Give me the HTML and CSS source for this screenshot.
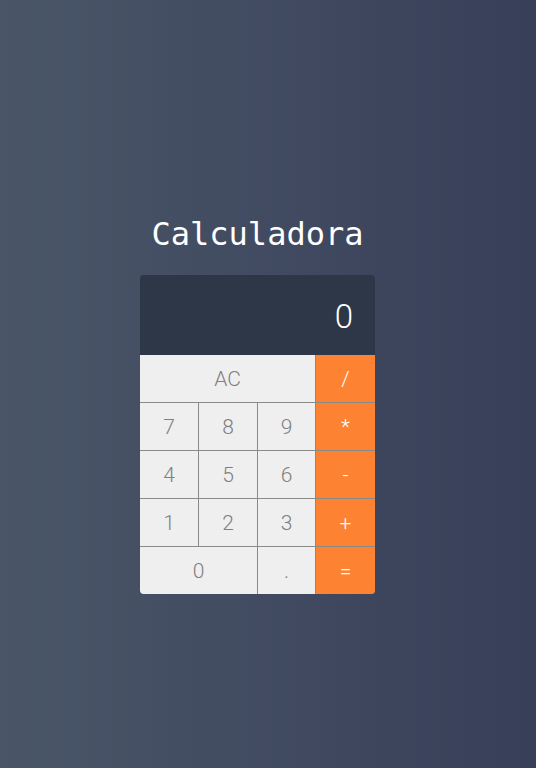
FILE: index.html
```html
<!DOCTYPE html>
<html lang="pt">
<head>
<meta charset="utf-8">
<title>Calculadora</title>
<link rel="stylesheet" href="styles.css">
</head>
<body>
<main class="page">
  <h1 class="title">Calculadora</h1>
  <div class="calculator">
    <div class="display">0</div>
    <div class="keys">
      <button class="key span3">AC</button>
      <button class="key op">/</button>
      <button class="key">7</button>
      <button class="key">8</button>
      <button class="key">9</button>
      <button class="key op">*</button>
      <button class="key">4</button>
      <button class="key">5</button>
      <button class="key">6</button>
      <button class="key op">-</button>
      <button class="key">1</button>
      <button class="key">2</button>
      <button class="key">3</button>
      <button class="key op">+</button>
      <button class="key span2">0</button>
      <button class="key">.</button>
      <button class="key op">=</button>
    </div>
  </div>
</main>
</body>
</html>
```
FILE: styles.css
```css
* { box-sizing: border-box; }
html, body { margin: 0; height: 100%; }
body {
  background: linear-gradient(to right, #4a5668, #383f59);
  font-family: "DejaVu Sans Mono", "Liberation Mono", monospace;
}
.page {
  display: flex;
  flex-direction: column;
  align-items: center;
  padding-top: 216px;
  padding-right: 21px;
}
.title {
  margin: 0 0 22px;
  font-size: 32px;
  font-weight: 400;
  line-height: 37px;
  color: #ffffff;
}
.calculator {
  width: 235px;
  border-radius: 4px;
  overflow: hidden;
}
.display {
  height: 80px;
  background: #2d3748;
  color: #ffffff;
  font-family: Roboto, "DejaVu Sans Mono", sans-serif;
  font-size: 33px;
  font-weight: 300;
  display: flex;
  align-items: center;
  justify-content: flex-end;
  padding-right: 22px;
  padding-top: 2px;
}
.keys {
  display: grid;
  grid-template-columns: 58px 58px 57px 59px;
  grid-auto-rows: 47px;
  gap: 1px;
  background: #8a8a8a;
}
.key {
  border: 0;
  margin: 0;
  padding: 0;
  background: #efefef;
  color: #808080;
  font-family: Roboto, "DejaVu Sans Mono", sans-serif;
  font-size: 21px;
  font-weight: 300;
}
.key.op {
  background: #fd8332;
  color: #ffffff;
}
.span3 { grid-column: span 3; }
.span2 { grid-column: span 2; }
```
